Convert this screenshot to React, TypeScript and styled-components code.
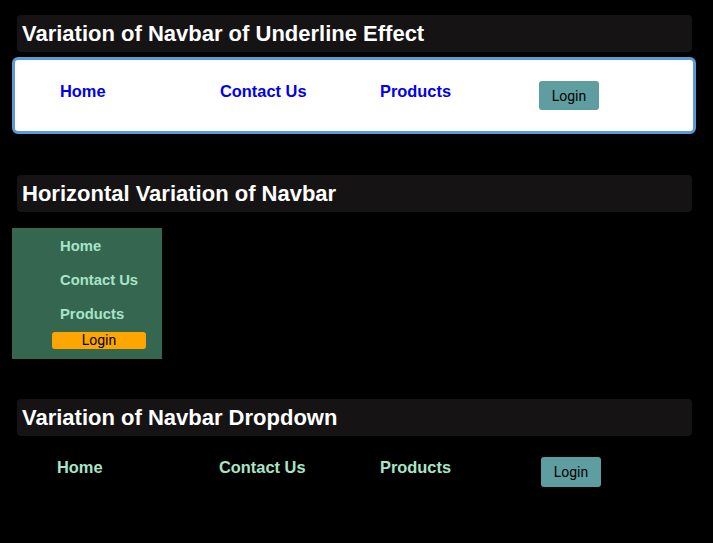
import React from "react";
import styled, { createGlobalStyle } from "styled-components";

const Global = createGlobalStyle`
  html, body { margin: 0; padding: 0; background: #000; }
  body { font-family: "Liberation Sans", Arial, sans-serif; }
`;

const Page = styled.div`
  width: 684px;
  padding: 15px 0 40px 12px;
  display: flex;
  flex-direction: column;
`;

const Heading = styled.h2<{ $mt?: number }>`
  margin: ${(p) => p.$mt ?? 0}px 0 0 5px;
  width: 675px;
  height: 37px;
  box-sizing: border-box;
  padding-left: 5px;
  display: flex;
  align-items: center;
  background: #151314;
  border-radius: 4px;
  color: #fff;
  font-family: "Liberation Sans", Arial, sans-serif;
  font-weight: 700;
  font-size: 22px;
`;

const Nav = styled.nav<{ $cols: string; $boxed?: boolean; $mt?: number }>`
  margin-top: ${(p) => p.$mt ?? 0}px;
  display: grid;
  grid-template-columns: ${(p) => p.$cols};
  align-items: start;
  box-sizing: border-box;
  padding-left: 45px;
  ${(p) =>
    p.$boxed
      ? `
    height: 77px;
    padding-top: 21px;
    background: #fff;
    border: 3px solid #5b9bd5;
    border-radius: 6px;
  `
      : ``}
`;

const NavLink = styled.a<{ $color: string; $size?: number; $pt?: number }>`
  display: block;
  padding-top: ${(p) => p.$pt ?? 1}px;
  color: ${(p) => p.$color};
  font-family: "Liberation Sans", Arial, sans-serif;
  font-weight: 700;
  font-size: ${(p) => p.$size ?? 16.4}px;
  line-height: 18px;
  text-decoration: none;
  white-space: nowrap;
`;

const LoginButton = styled.button<{ $h: number }>`
  width: 60px;
  height: ${(p) => p.$h}px;
  padding: 0;
  border: none;
  border-radius: 3px;
  background: #5f9ea0;
  color: #000;
  font-family: Roboto, "Liberation Sans", Arial, sans-serif;
  font-size: 14px;
`;

const SidePanel = styled.nav`
  margin-top: 16px;
  width: 150px;
  height: 131px;
  box-sizing: border-box;
  padding: 9px 0 10px 48px;
  background: #346650;
  display: flex;
  flex-direction: column;
  gap: 16px;
`;

const SideLogin = styled.button`
  margin: -7px 0 0 -8px;
  width: 94px;
  height: 17px;
  padding: 0;
  border: none;
  border-radius: 3px;
  background: #ffa500;
  color: #000;
  font-family: Roboto, "Liberation Sans", Arial, sans-serif;
  font-size: 14px;
  line-height: 17px;
`;

const links = ["Home", "Contact Us", "Products"];
const blue = "#0000ee";
const mint = "#a8e4c8";

export default function App() {
  return (
    <>
      <Global />
      <Page>
        <Heading>Variation of Navbar of Underline Effect</Heading>
        <Nav $boxed $mt={5} $cols="160px 160px 159px auto">
          {links.map((l) => (
            <NavLink key={l} href="#" $color={blue}>{l}</NavLink>
          ))}
          <LoginButton $h={29}>Login</LoginButton>
        </Nav>

        <Heading $mt={41}>Horizontal Variation of Navbar</Heading>
        <SidePanel>
          {links.map((l) => (
            <NavLink key={l} href="#" $color={mint} $size={14.8} $pt={0}>{l}</NavLink>
          ))}
          <SideLogin>Login</SideLogin>
        </SidePanel>

        <Heading $mt={40}>Variation of Navbar Dropdown</Heading>
        <Nav $mt={21} $cols="162px 161px 161px auto">
          {links.map((l) => (
            <NavLink key={l} href="#" $color={mint}>{l}</NavLink>
          ))}
          <LoginButton $h={30}>Login</LoginButton>
        </Nav>
      </Page>
    </>
  );
}
